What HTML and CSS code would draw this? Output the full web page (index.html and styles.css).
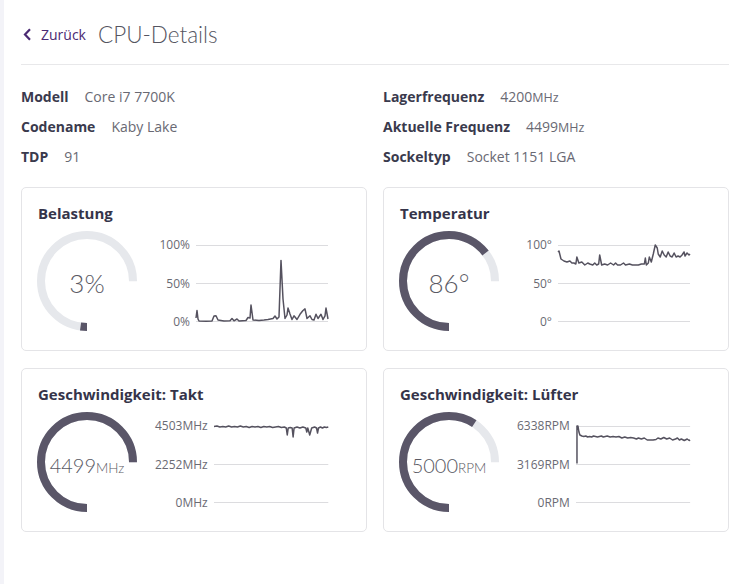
FILE: index.html
```html
<!DOCTYPE html>
<html lang="de">
<head>
<meta charset="utf-8">
<title>CPU-Details</title>
<link rel="stylesheet" href="styles.css">
</head>
<body>
<div class="rail"></div>
<main class="main">
  <header class="header">
    <a class="back" href="#">
      <svg class="chev" width="9" height="13" viewBox="0 0 9 13"><path d="M7 1.2 L2 6.5 L7 11.8" fill="none" stroke="currentColor" stroke-width="2.2"/></svg>
      <span>Zurück</span>
    </a>
    <h1 class="title">CPU-Details</h1>
  </header>

  <section class="info">
    <div class="info-col">
      <div class="row"><span class="k">Modell</span><span class="v">Core i7 7700K</span></div>
      <div class="row"><span class="k">Codename</span><span class="v">Kaby Lake</span></div>
      <div class="row"><span class="k">TDP</span><span class="v">91</span></div>
    </div>
    <div class="info-col">
      <div class="row"><span class="k">Lagerfrequenz</span><span class="v">4200<small>MHz</small></span></div>
      <div class="row"><span class="k">Aktuelle Frequenz</span><span class="v">4499<small>MHz</small></span></div>
      <div class="row"><span class="k">Sockeltyp</span><span class="v">Socket 1151 LGA</span></div>
    </div>
  </section>

  <section class="cards">
    <div class="card">
      <h2 class="card-title">Belastung</h2>
      <div class="card-body">
        <div class="gauge">
          <svg viewBox="0 0 100 100" class="ring"><circle class="track" cx="50" cy="50" r="46"/><circle class="fill" cx="50" cy="50" r="46" style="stroke-dasharray:6.5 300"/></svg>
          <div class="gv">3%</div>
        </div>
        <div class="chart">
          <div class="labels"><span>100%</span><span>50%</span><span>0%</span></div>
          <div class="plot">
            <svg viewBox="0 0 132 77" preserveAspectRatio="none">
              <line x1="0" y1="0.5" x2="132" y2="0.5" class="grid"/><line x1="0" y1="38.5" x2="132" y2="38.5" class="grid"/><line x1="0" y1="76.5" x2="132" y2="76.5" class="grid"/>
              <polyline class="line" points="0,73 1,65.5 2,74 3,76 10,76.2 16,76 18,71 20,70.8 22,75 28,76 34,75.8 36,73.5 38,75.8 41,74 43,76 50,75.5 52,72.5 54,73 55,60 57,75 63,75.5 68,75 72,74.5 77,73.5 79,71 81,74 83,72 85,15.4 87,54 89,73.5 91,70 92,63 94,69 96,74.5 98,70.8 101,74.5 104,69.3 107,65.5 109,63.9 111,73.5 114,70.8 116,74.5 118,75 120,69.3 122,73.5 125,69.3 127,74.5 129,70.8 130,63.1 132,74"/>
            </svg>
          </div>
        </div>
      </div>
    </div>

    <div class="card">
      <h2 class="card-title">Temperatur</h2>
      <div class="card-body">
        <div class="gauge">
          <svg viewBox="0 0 100 100" class="ring"><circle class="track" cx="50" cy="50" r="46"/><circle class="fill" cx="50" cy="50" r="46" style="stroke-dasharray:186.4 300"/></svg>
          <div class="gv">86°</div>
        </div>
        <div class="chart">
          <div class="labels"><span>100°</span><span>50°</span><span>0°</span></div>
          <div class="plot">
            <svg viewBox="0 0 133 77" preserveAspectRatio="none">
              <line x1="0" y1="0.5" x2="133" y2="0.5" class="grid"/><line x1="0" y1="38.5" x2="133" y2="38.5" class="grid"/><line x1="0" y1="76.5" x2="133" y2="76.5" class="grid"/>
              <polyline class="line" points="0,7 1,6 3,14 6,16 9,17 12,16 14,18 16,18 18,19 19,12 21,18 24,17 27,20 30,18 32,19 35,20 37,18 39,20 41,19 42,10 44,20 47,19 50,20 53,18 56,20 58,18 60,20 63,20 66,18 68,20 72,19 75,20 78,20 81,20 84,19 87,19 88,13 89,20 91,18 92,12 94,17 96,9 98,0 100,3 101,9 103,12 105,6 107,10 109,12 111,7 113,11 115,12 117,8 119,12 121,11 123,12 125,10 127,7 128,11 130,8 132,10 133,9"/>
            </svg>
          </div>
        </div>
      </div>
    </div>

    <div class="card">
      <h2 class="card-title">Geschwindigkeit: Takt</h2>
      <div class="card-body">
        <div class="gauge">
          <svg viewBox="0 0 100 100" class="ring"><circle class="track" cx="50" cy="50" r="46"/><circle class="fill" cx="50" cy="50" r="46" style="stroke-dasharray:216.6 300"/></svg>
          <div class="gv unit">4499<small>MHz</small></div>
        </div>
        <div class="chart">
          <div class="labels"><span>4503MHz</span><span>2252MHz</span><span>0MHz</span></div>
          <div class="plot">
            <svg viewBox="0 0 117 77" preserveAspectRatio="none">
              <line x1="0" y1="38.5" x2="117" y2="38.5" class="grid"/><line x1="0" y1="76.5" x2="117" y2="76.5" class="grid"/>
              <polyline class="line" points="0,0.5 3,0 6,1 9,0.5 12,1 15,0 18,1 21,0.5 24,1 27,0 30,1 33,0.5 36,1.5 39,0.5 42,1 45,0.5 48,1.5 51,0.5 54,1 57,0.5 60,1.5 63,1 66,0.5 69,1.5 72,1 74,2 75,9 76,2 78,1.5 80,2 81,11 82,2 85,1 88,2 91,1 94,2 95,6 96,2 98,9 100,2 103,1 105,2 106,7 107,2 109,1 111,2 113,1 115,1.5 117,1"/>
            </svg>
          </div>
        </div>
      </div>
    </div>

    <div class="card">
      <h2 class="card-title">Geschwindigkeit: Lüfter</h2>
      <div class="card-body">
        <div class="gauge">
          <svg viewBox="0 0 100 100" class="ring"><circle class="track" cx="50" cy="50" r="46"/><circle class="fill" cx="50" cy="50" r="46" style="stroke-dasharray:171 300"/></svg>
          <div class="gv unit">5000<small>RPM</small></div>
        </div>
        <div class="chart">
          <div class="labels"><span>6338RPM</span><span>3169RPM</span><span>0RPM</span></div>
          <div class="plot">
            <svg viewBox="0 0 117 77" preserveAspectRatio="none">
              <line x1="0" y1="0.5" x2="117" y2="0.5" class="grid"/><line x1="0" y1="38.5" x2="117" y2="38.5" class="grid"/><line x1="0" y1="76.5" x2="117" y2="76.5" class="grid"/>
              <polyline class="line" points="1,37.5 1,0 2,0 3,6 4,9 6,10 8,10.5 10,10 12,11 14,10.5 16,11 18,10 20,10.5 22,11 24,10.5 26,10 28,11 30,10.5 32,10 35,11 38,10.5 41,11 44,10.5 47,12 50,11 53,12 56,11.5 59,12 62,13 64,12 67,13 70,12 73,14 76,14 79,14 82,13.5 84,12 87,13 90,11.5 93,13 96,12 99,14 102,13 104,12 106,14 108,13 111,14.5 114,13 116,14.5 117,14"/>
            </svg>
          </div>
        </div>
      </div>
    </div>
  </section>
</main>
</body>
</html>
```
FILE: styles.css
```css
* { box-sizing: border-box; margin: 0; padding: 0; }
html, body { height: 100%; }
body {
  font-family: "Open Sans", "Noto Sans", sans-serif;
  background: #ffffff;
  color: #3a3a4d;
  display: flex;
  min-height: 584px;
}
.rail { width: 4px; flex: none; background: #f3f3f8; }
.main { flex: 1; padding: 0 14px 0 17px; }

.header {
  display: flex;
  align-items: center;
  height: 65px;
  padding-top: 4px;
  border-bottom: 1px solid #e8e8ea;
}
.back {
  display: flex;
  align-items: center;
  color: #4b2a73;
  text-decoration: none;
  font-size: 14px;
  margin-left: 2px;
}
.chev { margin-right: 9px; }
.title {
  margin-left: 12px;
  font-family: "Lato", "Open Sans", sans-serif;
  font-size: 22.5px;
  font-weight: 300;
  color: #555561;
}

.info {
  display: grid;
  grid-template-columns: 1fr 1fr;
  column-gap: 16px;
  margin-top: 17px;
}
.info-col { display: flex; flex-direction: column; }
.row { display: flex; align-items: baseline; height: 30px; line-height: 30px; gap: 16px; font-size: 14px; }
.k { font-weight: 700; color: #3a3a4d; }
.v { color: #696973; }
.v small { font-size: 12.5px; }

.cards {
  display: grid;
  grid-template-columns: 1fr 1fr;
  gap: 17px 16px;
  margin-top: 15px;
}
.card {
  height: 164px;
  border: 1px solid #e4e4e7;
  border-radius: 5px;
  padding: 15px 38px 0 15px;
}
.card-title {
  font-size: 15px;
  line-height: 20px;
  font-weight: 700;
  color: #35344a;
  margin-left: 1px;
}
.card-body { display: flex; margin-top: 8px; }

.gauge {
  width: 100px;
  height: 100px;
  flex: none;
  display: grid;
  place-items: center;
}
.gauge > * { grid-area: 1 / 1; }
.ring { width: 100px; height: 100px; transform: rotate(90deg); }
.track { fill: none; stroke: #e6e8ec; stroke-width: 8; stroke-dasharray: 216.77 300; }
.fill { fill: none; stroke: #5a5668; stroke-width: 8; }
.gv {
  font-family: "Lato", "Open Sans", sans-serif;
  font-size: 26px;
  font-weight: 300;
  color: #5a5a64;
  line-height: 1;
  white-space: nowrap;
  margin-top: 4px;
}
.gv.unit { font-size: 20px; margin-top: 6px; }
.gv small { font-size: 13.5px; }

.chart {
  flex: 1;
  display: flex;
  gap: 6px;
  margin: 7px 0 0 18px;
}
.labels {
  min-width: 35px;
  height: 91px;
  display: flex;
  flex-direction: column;
  justify-content: space-between;
  align-items: flex-end;
  font-size: 12px;
  line-height: 14px;
  color: #6a6a73;
}
.plot { flex: 1; height: 77px; margin-top: 7px; }
.plot svg { display: block; width: 100%; height: 100%; overflow: visible; }
.grid { stroke: #dcdcdf; stroke-width: 1; vector-effect: non-scaling-stroke; }
.line { fill: none; stroke: #55525f; stroke-width: 1.5; stroke-linejoin: round; vector-effect: non-scaling-stroke; }
```
